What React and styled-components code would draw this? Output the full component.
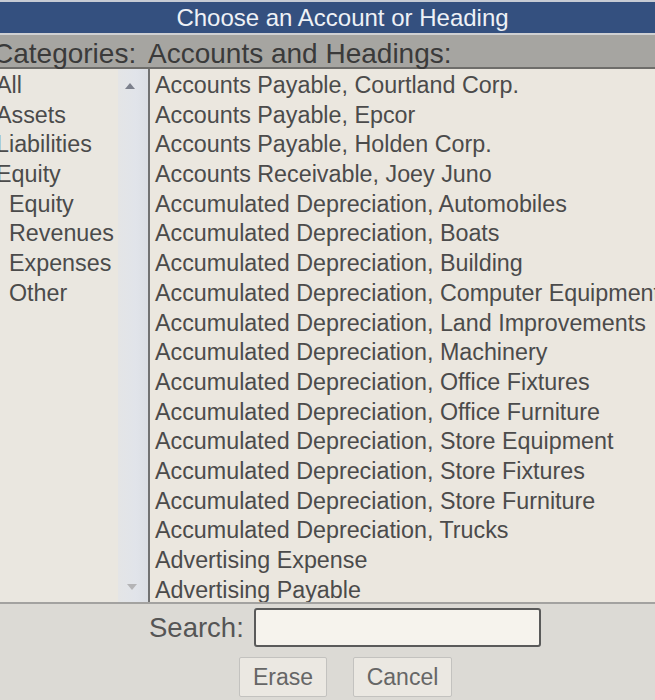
import styled, { createGlobalStyle } from "styled-components";

const GlobalStyle = createGlobalStyle`
	html, body {
		margin: 0;
		padding: 0;
		background: #dbd9d4;
		overflow: hidden;
	}
	* {
		box-sizing: border-box;
	}
`;

const categories = [
	{ name: "All", nested: false },
	{ name: "Assets", nested: false },
	{ name: "Liabilities", nested: false },
	{ name: "Equity", nested: false },
	{ name: "Equity", nested: true },
	{ name: "Revenues", nested: true },
	{ name: "Expenses", nested: true },
	{ name: "Other", nested: true },
];

const accounts = [
	"Accounts Payable, Courtland Corp.",
	"Accounts Payable, Epcor",
	"Accounts Payable, Holden Corp.",
	"Accounts Receivable, Joey Juno",
	"Accumulated Depreciation, Automobiles",
	"Accumulated Depreciation, Boats",
	"Accumulated Depreciation, Building",
	"Accumulated Depreciation, Computer Equipment",
	"Accumulated Depreciation, Land Improvements",
	"Accumulated Depreciation, Machinery",
	"Accumulated Depreciation, Office Fixtures",
	"Accumulated Depreciation, Office Furniture",
	"Accumulated Depreciation, Store Equipment",
	"Accumulated Depreciation, Store Fixtures",
	"Accumulated Depreciation, Store Furniture",
	"Accumulated Depreciation, Trucks",
	"Advertising Expense",
	"Advertising Payable",
];

const App = () => {
	return (
		<>
			<GlobalStyle />
			<StyledDialog>
				<div className="title">Choose an Account or Heading</div>
				<div className="header">
					<span className="cat-label">Categories:</span>
					<span>Accounts and Headings:</span>
				</div>
				<div className="lists">
					<ul className="categories">
						{categories.map((c, i) => (
							<CategoryItem key={i} nested={c.nested}>
								{c.name}
							</CategoryItem>
						))}
					</ul>
					<div className="scroll">
						<Arrow up />
						<Arrow />
					</div>
					<ul className="accounts">
						{accounts.map((a) => (
							<li key={a}>{a}</li>
						))}
					</ul>
				</div>
				<div className="footer">
					<div className="search">
						<label htmlFor="search">Search:</label>
						<input id="search" type="text" />
					</div>
					<div className="buttons">
						<Button width={88}>Erase</Button>
						<Button width={99}>Cancel</Button>
					</div>
				</div>
			</StyledDialog>
		</>
	);
};

const StyledDialog = styled.div`
	width: 655px;
	height: 700px;
	display: flex;
	flex-direction: column;
	font-family: "Liberation Sans", Arial, sans-serif;
	overflow: hidden;
	border-top: 2px solid #c6cbd4;
	.title {
		height: 33px;
		background: #34507f;
		color: #eef1f6;
		font-size: 24px;
		display: flex;
		justify-content: center;
		align-items: center;
		padding-left: 30px;
		border-bottom: 2px solid #cfd0d2;
	}
	.header {
		height: 34px;
		background: #a6a5a1;
		color: #3a3a3a;
		font-size: 28px;
		display: grid;
		grid-template-columns: 148px 1fr;
		align-items: center;
		padding-top: 3px;
		border-bottom: 2px solid #6e6d6a;
		white-space: nowrap;
	}
	.cat-label {
		margin-left: -7px;
	}
	.lists {
		height: 533px;
		display: grid;
		grid-template-columns: 118px 30px 1fr;
		background: #ebe7df;
	}
	.categories {
		list-style: none;
		margin: 0;
		padding: 2px 0 0 0;
		background: #eae7e0;
	}
	.scroll {
		display: flex;
		flex-direction: column;
		justify-content: space-between;
		align-items: center;
		padding: 14px 0 12px 0;
		background: linear-gradient(90deg, #e4e5e6, #e1e4ea 60%, #dcdfe4);
	}
	.accounts {
		list-style: none;
		margin: 0;
		padding: 2px 0 0 5px;
		border-left: 2px solid #727272;
		white-space: nowrap;
		overflow: hidden;
		li {
			height: 29.7px;
			line-height: 29.7px;
			font-size: 23.3px;
			color: #4b4b4b;
		}
	}
	.footer {
		flex: 1;
		border-top: 2px solid #a3a2a0;
		background: #dcdad5;
		display: flex;
		flex-direction: column;
		padding-top: 4px;
	}
	.search {
		display: flex;
		align-items: center;
		gap: 10px;
		padding-left: 149px;
		label {
			font-size: 27.5px;
			color: #555;
		}
		input {
			width: 287px;
			height: 39px;
			background: #f6f3ed;
			border: 2px solid #5a5a5a;
			border-radius: 3px;
		}
	}
	.buttons {
		display: flex;
		gap: 26px;
		padding-left: 239px;
		margin-top: 10px;
	}
`;

const CategoryItem = styled.li`
	height: 29.7px;
	line-height: 29.7px;
	font-size: 23.3px;
	color: #4b4b4b;
	white-space: nowrap;
	margin-left: ${(props) => (props.nested ? "9px" : "-4px")};
`;

const Arrow = styled.span`
	width: 0;
	height: 0;
	border-left: 5px solid transparent;
	border-right: 5px solid transparent;
	${(props) =>
		props.up
			? "border-bottom: 6px solid #7c808c; margin-left: -6px;"
			: "border-top: 6px solid #b4b4b6; margin-left: -2px;"}
`;

const Button = styled.button`
	width: ${(props) => props.width}px;
	height: 40px;
	background: #ebe8e2;
	border: 1px solid #c3c2bf;
	border-radius: 2px;
	font-family: "Liberation Sans", Arial, sans-serif;
	font-size: 23px;
	color: #666;
	padding: 0;
`;

export default App;
